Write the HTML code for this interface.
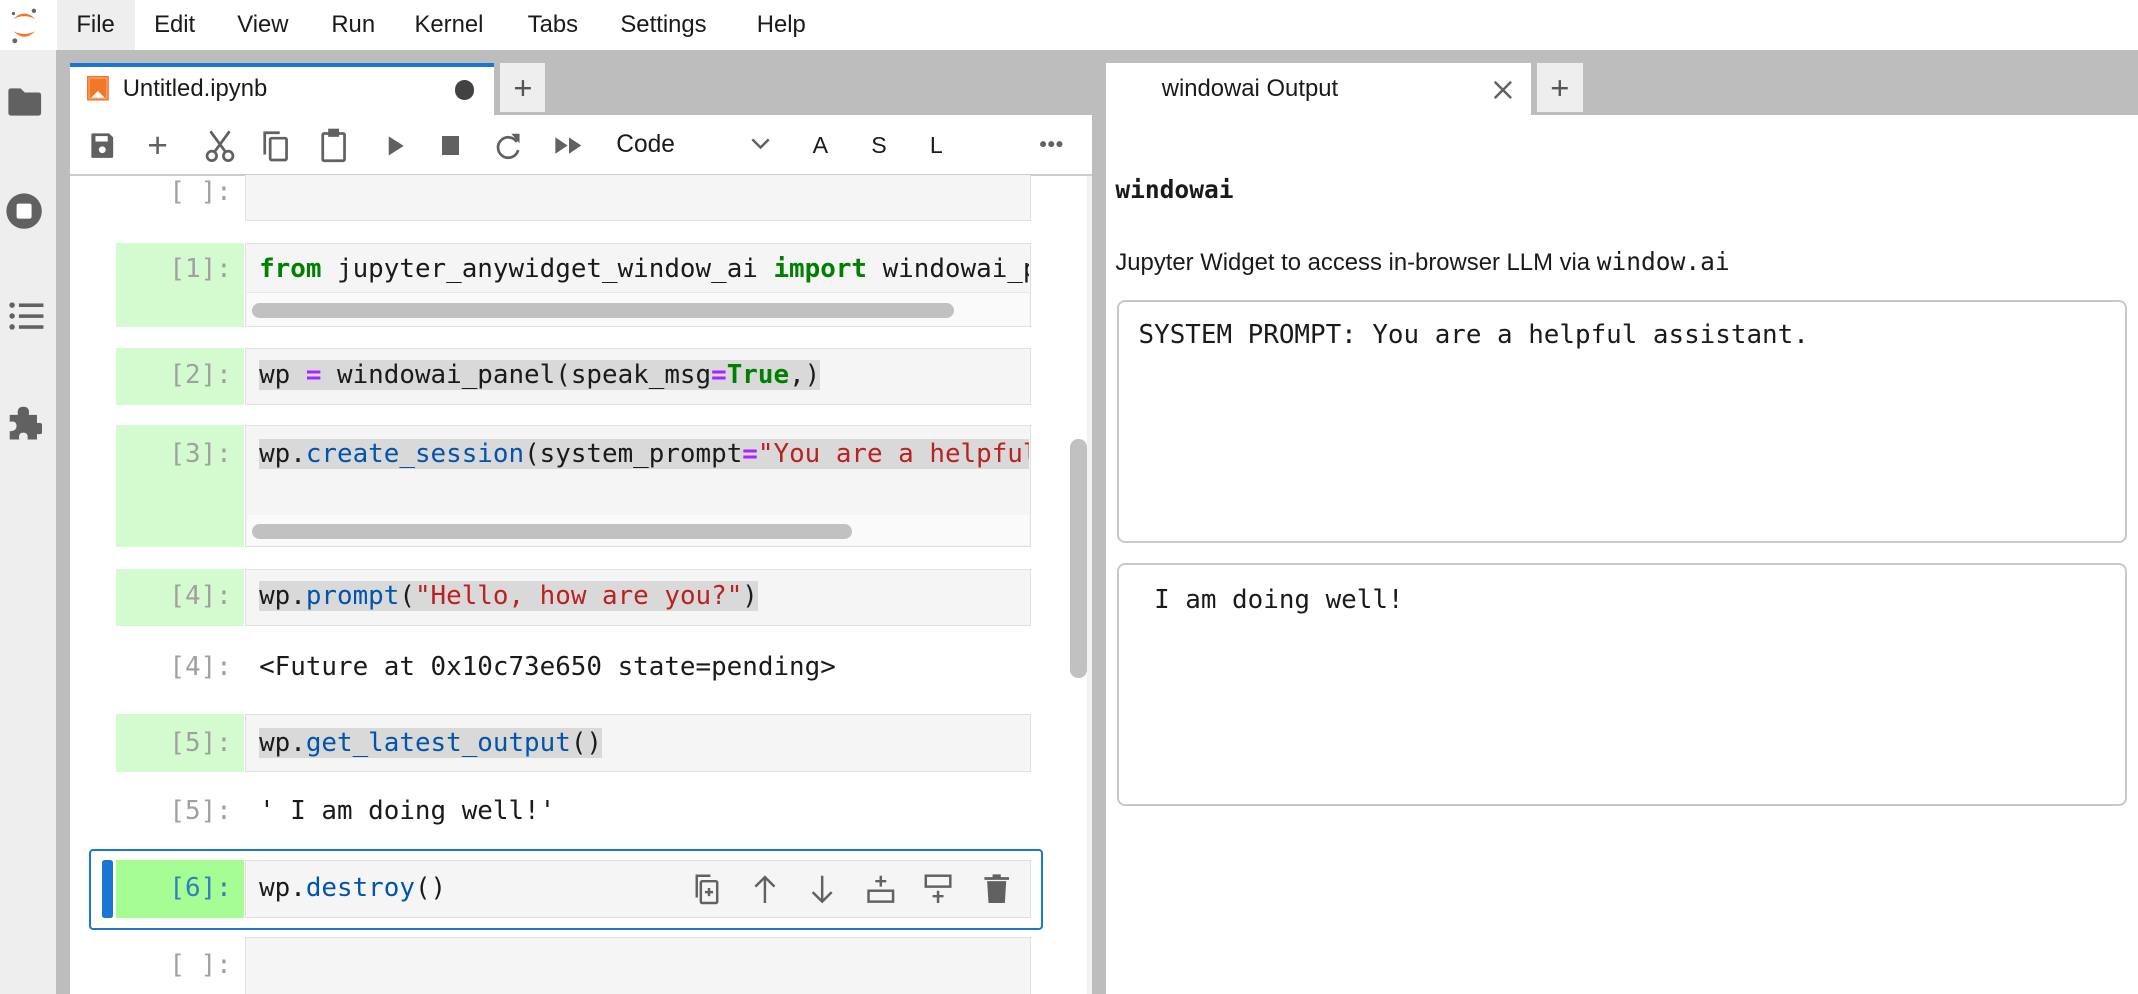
<!DOCTYPE html>
<html><head><meta charset="utf-8"><style>
*{margin:0;padding:0;box-sizing:border-box}
html,body{width:2138px;height:994px;overflow:hidden;background:#fff}
#w{zoom:1.36352;width:1568px;height:729px;position:relative;background:#bdbdbd;font-family:"Liberation Sans",sans-serif;color:#1a1a1a}
.a{position:absolute}
.m{font-family:"DejaVu Sans Mono","Liberation Mono",monospace;font-size:19px;white-space:pre;line-height:22px}
.menu span{position:absolute;top:8px;font-size:17.5px}
.ic{position:absolute}
.p{position:absolute;width:90px;text-align:right;left:80px;color:#a0a0a0}
.in{position:absolute;left:180px;width:576px;background:#f5f5f5;border:1px solid #e0e0e0}
.g{position:absolute;left:85px;width:94px;background:#d4fbcf}
.hl{background:#d9d9d9}
.k{color:#008000;font-weight:bold}.o{color:#aa22ff;font-weight:bold}.f{color:#0055aa}.s{color:#ba2121}
.sb{position:absolute;left:185px;height:11px;border-radius:6px;background:#c1c1c1}
</style></head><body><div id="w">
<div class="a" style="left:0;top:0;width:1568px;height:37px;background:#fff"></div>
<div class="a" style="left:42px;top:0;width:57px;height:37px;background:#eee"></div>
<svg class="ic" style="left:6px;top:3px" width="24" height="30" viewBox="0 0 24 30"><path d="M4 11 Q12 3 20 11 Q12 7 4 11Z" fill="#f37726"/><path d="M4 20 Q12 28 20 20 Q12 24 4 20Z" fill="#f37726"/><circle cx="19" cy="5" r="1.6" fill="#666"/><circle cx="5" cy="27" r="1.8" fill="#666"/><circle cx="4" cy="7" r="1.2" fill="#666"/></svg>
<div class="menu"><span style="left:56px">File</span><span style="left:113px">Edit</span><span style="left:174px">View</span><span style="left:243px">Run</span><span style="left:304px">Kernel</span><span style="left:387px">Tabs</span><span style="left:455px">Settings</span><span style="left:555px">Help</span></div>
<div class="a" style="left:0;top:37px;width:41px;height:692px;background:#eee"></div>
<svg class="ic" style="left:5px;top:64px" width="26" height="22" viewBox="0 0 26 22"><path d="M1 3 Q1 1 3 1 H10 L13 4 H23 Q25 4 25 6 V19 Q25 21 23 21 H3 Q1 21 1 19Z" fill="#616161"/></svg>
<svg class="ic" style="left:4px;top:141px" width="28" height="28" viewBox="0 0 28 28"><circle cx="14" cy="14" r="13" fill="#616161"/><rect x="8.5" y="8.5" width="11" height="11" rx="1.5" fill="#fff"/></svg>
<svg class="ic" style="left:6px;top:221px" width="26" height="22" viewBox="0 0 26 22"><g fill="#616161"><circle cx="3" cy="3" r="2"/><circle cx="3" cy="11" r="2"/><circle cx="3" cy="19" r="2"/><rect x="8" y="1.8" width="18" height="2.6"/><rect x="8" y="9.8" width="18" height="2.6"/><rect x="8" y="17.8" width="18" height="2.6"/></g></svg>
<svg class="ic" style="left:5px;top:296px" width="26" height="28" viewBox="0 0 26 28"><path d="M2 8 H8 Q7 2 12 2 Q17 2 16 8 H22 V14 Q27 13 27 18 Q27 23 22 22 V26 H15 Q16 21 12 21 Q8 21 9 26 H2 V20 Q7 20 7 16 Q7 12 2 13Z" fill="#616161"/></svg>
<div class="a" style="left:51px;top:46px;width:311px;height:39px;background:#fff;border-top:3px solid #1976d2"></div>
<svg class="ic" style="left:64px;top:56px" width="16" height="18" viewBox="0 0 16 18"><rect x="0.5" y="0.5" width="15" height="17" fill="#f37726" stroke="#f37726"/><path d="M1.5 1.5 H14.5 V16.5 H1.5Z" fill="none" stroke="#f7a070"/><path d="M3 16 L8 11 L13 16" fill="#fff"/></svg>
<div class="a" style="left:90px;top:55px;font-size:17.5px">Untitled.ipynb</div>
<div class="a" style="left:334px;top:59px;width:14px;height:14px;border-radius:50%;background:#424242"></div>
<div class="a" style="left:367px;top:46px;width:33px;height:36px;background:#eee;font-size:24px;text-align:center;line-height:36px;color:#555">+</div>
<div class="a" style="left:51px;top:84px;width:750px;height:45px;background:#fff;border-bottom:2px solid #ccc"></div>
<svg class="ic" style="left:66px;top:97px" width="18" height="20" viewBox="0 0 18 20"><path d="M1 2 Q1 1 2 1 H14 L17 4 V18 Q17 19 16 19 H2 Q1 19 1 18Z" fill="#616161"/><rect x="4" y="3" width="9" height="4" fill="#fff"/><circle cx="9" cy="13" r="2.5" fill="#fff"/></svg>
<div class="a" style="left:108px;top:92px;font-size:26px;color:#616161">+</div>
<svg class="ic" style="left:150px;top:95px" width="22" height="24" viewBox="0 0 22 24"><g fill="none" stroke="#616161" stroke-width="2"><circle cx="5" cy="19" r="3.5"/><circle cx="17" cy="19" r="3.5"/><path d="M7 16 L18 1 M15 16 L4 1"/></g></svg>
<svg class="ic" style="left:192px;top:95px" width="20" height="24" viewBox="0 0 20 24"><g fill="none" stroke="#616161" stroke-width="2"><rect x="6" y="6" width="12" height="16" rx="1"/><path d="M2 18 V2 H13"/></g></svg>
<svg class="ic" style="left:235px;top:94px" width="20" height="26" viewBox="0 0 20 26"><g fill="none" stroke="#616161" stroke-width="2"><rect x="2" y="4" width="16" height="20" rx="1"/><rect x="7" y="1.5" width="6" height="4" fill="#616161"/></g></svg>
<svg class="ic" style="left:283px;top:99px" width="14" height="16" viewBox="0 0 14 16"><path d="M2 1 L13 8 L2 15Z" fill="#616161"/></svg>
<div class="a" style="left:324px;top:100px;width:13px;height:14px;background:#616161"></div>
<svg class="ic" style="left:363px;top:96px" width="20" height="22" viewBox="0 0 20 22"><path d="M16 8 A7.5 7.5 0 1 0 17 14" fill="none" stroke="#616161" stroke-width="2"/><path d="M12 2 L18 2 L18 9Z" fill="#616161"/></svg>
<svg class="ic" style="left:406px;top:100px" width="22" height="14" viewBox="0 0 22 14"><path d="M1 1 L10 7 L1 13Z M11 1 L20 7 L11 13Z" fill="#616161"/></svg>
<div class="a" style="left:452px;top:96px;font-size:18px">Code</div>
<svg class="ic" style="left:551px;top:101px" width="14" height="9" viewBox="0 0 14 9"><path d="M1 1 L7 7 L13 1" fill="none" stroke="#616161" stroke-width="1.8"/></svg>
<div class="a" style="left:596px;top:97px;font-size:17px">A</div>
<div class="a" style="left:639px;top:97px;font-size:17px">S</div>
<div class="a" style="left:682px;top:97px;font-size:17px">L</div>
<svg class="ic" style="left:762px;top:103px" width="18" height="6" viewBox="0 0 18 6"><g fill="#616161"><circle cx="3" cy="3" r="2.2"/><circle cx="9" cy="3" r="2.2"/><circle cx="15" cy="3" r="2.2"/></g></svg>
<div class="a" style="left:51px;top:129px;width:750px;height:600px;background:#fff"></div>
<div class="a" style="left:797px;top:129px;width:4px;height:600px;background:#f2f2f2"></div>
<div class="a" style="left:785px;top:322px;width:12px;height:175px;border-radius:6px;background:#c1c1c1"></div>
<div class="in" style="top:128px;height:34px;border-top:none"></div>
<div class="p m" style="top:130px">[ ]:</div>
<div class="g" style="top:178px;height:62px"></div>
<div class="in" style="top:178px;height:62px"></div>
<div class="a" style="left:181px;top:214px;width:574px;height:25px;background:#fafafa;border-top:1px solid #e8e8e8"></div>
<div class="sb" style="top:222px;width:515px"></div>
<div class="p m" style="top:186px">[1]:</div>
<div class="a m" style="left:190px;top:186px;width:565px;overflow:hidden"><span class="k">from</span> jupyter_anywidget_window_ai <span class="k">import</span> windowai_panel</div>
<div class="g" style="top:255px;height:42px"></div>
<div class="in" style="top:255px;height:42px"></div>
<div class="p m" style="top:264px">[2]:</div>
<div class="a m" style="left:190px;top:264px"><span class="hl">wp <span class="o">=</span> windowai_panel(speak_msg<span class="o">=</span><span class="k">True</span>,)</span></div>
<div class="g" style="top:312px;height:89px"></div>
<div class="in" style="top:312px;height:89px"></div>
<div class="a" style="left:181px;top:378px;width:574px;height:22px;background:#fafafa"></div>
<div class="sb" style="top:384px;width:440px"></div>
<div class="p m" style="top:322px">[3]:</div>
<div class="a m" style="left:190px;top:322px;width:565px;overflow:hidden"><span class="hl">wp.<span class="f">create_session</span>(system_prompt<span class="o">=</span><span class="s">"You are a helpful assistant."</span></span></div>
<div class="g" style="top:417px;height:42px"></div>
<div class="in" style="top:417px;height:42px"></div>
<div class="p m" style="top:426px">[4]:</div>
<div class="a m" style="left:190px;top:426px"><span class="hl">wp.<span class="f">prompt</span>(<span class="s">"Hello, how are you?"</span>)</span></div>
<div class="p m" style="top:478px">[4]:</div>
<div class="a m" style="left:190px;top:478px">&lt;Future at 0x10c73e650 state=pending&gt;</div>
<div class="g" style="top:524px;height:42px"></div>
<div class="in" style="top:524px;height:42px"></div>
<div class="p m" style="top:534px">[5]:</div>
<div class="a m" style="left:190px;top:534px"><span class="hl">wp.<span class="f">get_latest_output</span>()</span></div>
<div class="p m" style="top:584px">[5]:</div>
<div class="a m" style="left:190px;top:584px">' I am doing well!'</div>
<div class="a" style="left:65px;top:623px;width:700px;height:59px;border:2px solid #1976d2;border-radius:3px"></div>
<div class="a" style="left:75px;top:631px;width:8px;height:42px;background:#1976d2;border-radius:2px"></div>
<div class="g" style="top:631px;height:42px;background:#a6fd93"></div>
<div class="in" style="top:631px;height:42px"></div>
<div class="p m" style="top:640px;color:#307fc1">[6]:</div>
<div class="a m" style="left:190px;top:640px">wp.<span class="f">destroy</span>()</div>
<svg class="ic" style="left:509px;top:640px" width="240" height="24" viewBox="0 0 240 24"><g fill="none" stroke="#616161" stroke-width="1.8">
<rect x="5" y="6" width="12" height="16" rx="1"/><path d="M2 18 V2 H12 M11 11 V17 M8 14 H14"/>
<path d="M52 22 V3 M45 10 L52 3 L59 10"/>
<path d="M94 2 V21 M87 14 L94 21 L101 14"/>
<rect x="128" y="13" width="18" height="8"/><path d="M137 2 V10 M133 6 H141"/>
<rect x="170" y="2" width="18" height="8"/><path d="M179 13 V22 M175 17 H183"/>
</g><path d="M215 6 H229 L228 22 H216Z M213 3 H231 V5 H213Z M219 1 H225 V3 H219Z" fill="#616161"/></svg>
<div class="in" style="top:687px;height:50px"></div>
<div class="p m" style="top:697px">[ ]:</div>
<div class="a" style="left:811px;top:46px;width:312px;height:39px;background:#fff"></div>
<div class="a" style="left:852px;top:55px;font-size:17.5px">windowai Output</div>
<svg class="ic" style="left:1094px;top:58px" width="16" height="16" viewBox="0 0 16 16"><path d="M2 2 L14 14 M14 2 L2 14" stroke="#616161" stroke-width="1.8"/></svg>
<div class="a" style="left:1127px;top:46px;width:34px;height:36px;background:#eee;font-size:24px;text-align:center;line-height:36px;color:#555">+</div>
<div class="a" style="left:811px;top:84px;width:757px;height:645px;background:#fff"></div>
<div class="a m" style="left:818px;top:128px;font-size:18px;font-weight:bold">windowai</div>
<div class="a" style="left:818px;top:181px;font-size:17.5px">Jupyter Widget to access in-browser LLM via <span class="m" style="font-size:18px">window.ai</span></div>
<div class="a" style="left:819px;top:220px;width:741px;height:178px;border:1.5px solid #c8c8c8;border-radius:6px"></div>
<div class="a m" style="left:835px;top:235px">SYSTEM PROMPT: You are a helpful assistant.</div>
<div class="a" style="left:819px;top:413px;width:741px;height:178px;border:1.5px solid #c8c8c8;border-radius:6px"></div>
<div class="a m" style="left:835px;top:429px"> I am doing well!</div>
</div></body></html>
